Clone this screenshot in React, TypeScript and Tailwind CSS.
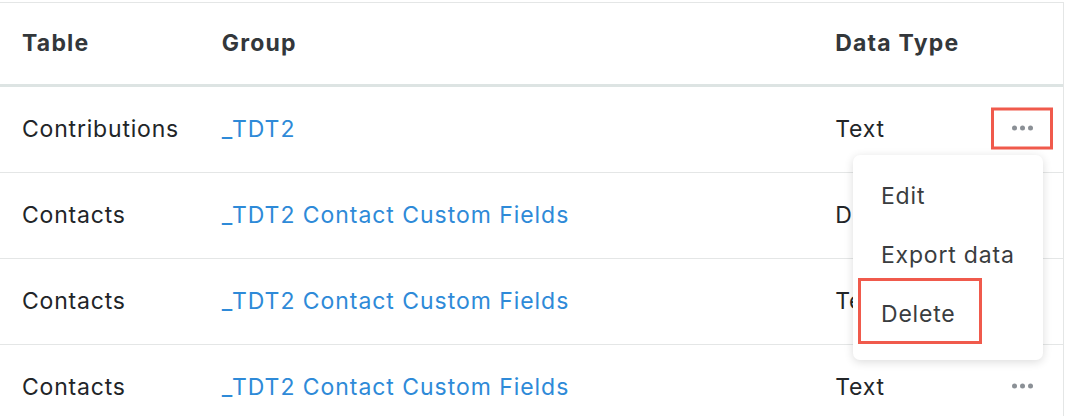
import React from "react";

const rows = [
  { table: "Contributions", group: "_TDT2", type: "Text", active: true },
  { table: "Contacts", group: "_TDT2 Contact Custom Fields", type: "Date" },
  { table: "Contacts", group: "_TDT2 Contact Custom Fields", type: "Text" },
  { table: "Contacts", group: "_TDT2 Contact Custom Fields", type: "Text" },
];

function Dots() {
  return (
    <div className="flex items-center gap-[3px]">
      <span className="block w-[5px] h-[5px] rounded-full bg-[#8b9096]" />
      <span className="block w-[5px] h-[5px] rounded-full bg-[#8b9096]" />
      <span className="block w-[5px] h-[5px] rounded-full bg-[#8b9096]" />
    </div>
  );
}

export default function App() {
  return (
    <div
      className="w-[1066px] h-[416px] bg-white overflow-hidden pt-[2px]"
      style={{ fontFamily: "Inter, 'Noto Sans', sans-serif" }}
    >
      <div className="relative w-[1064px] border-t border-r border-[#e4e6e6] text-[23px] tracking-[0.8px]">
        <div className="flex items-center h-[84px] pl-[22px] pr-[10px] border-b-[3px] border-[#dde4e3] font-bold tracking-[1.2px] text-[#33373b]">
          <div className="w-[200px]">Table</div>
          <div className="w-[614px]">Group</div>
          <div className="w-[156px]">Data Type</div>
          <div className="w-[62px]" />
        </div>
        {rows.map((r, i) => (
          <div
            key={i}
            className="flex items-center h-[86px] pl-[22px] pr-[10px] border-b border-[#e4e6e6] text-[#222528]"
          >
            <div className="w-[200px]">{r.table}</div>
            <div className="w-[614px] text-[#2e8ad8] tracking-[0.95px]">{r.group}</div>
            <div className="w-[156px]">{r.type}</div>
            <div
              className={
                "w-[62px] h-[42px] -translate-y-[1.5px] flex items-center justify-center border-[3px] " +
                (r.active ? "border-[#f05a4c]" : "border-transparent")
              }
            >
              <Dots />
            </div>
          </div>
        ))}
        <div className="absolute left-[853px] top-[152px] w-[190px] h-[205px] bg-white rounded-[7px] shadow-[0_2px_10px_rgba(0,0,0,0.14)] pt-[12px] text-[#3a3d40]">
          <div className="h-[59px] flex items-center pl-[28px]">Edit</div>
          <div className="h-[59px] flex items-center pl-[28px]">Export data</div>
          <div className="h-[59px] flex items-center pl-[28px]">Delete</div>
          <div className="absolute left-[5px] top-[123px] w-[124px] h-[66px] border-[3px] border-[#f05a4c]" />
        </div>
      </div>
    </div>
  );
}
